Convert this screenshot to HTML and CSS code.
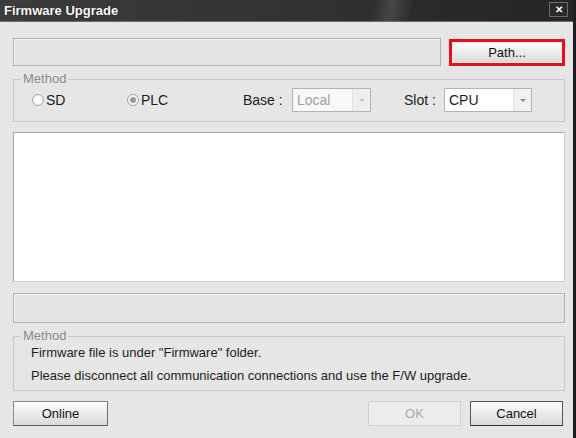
FILE: index.html
```html
<!DOCTYPE html>
<html>
<head>
    <title>Firmware Upgrade</title>
    <link rel="stylesheet" href="styles.css">
</head>
<body>
    <div class="dialog">
        <div class="titlebar">
            <span class="title">Firmware Upgrade</span>
            <span class="close">&#x2715;</span>
        </div>
        <div class="content">
            <div class="pathrow">
                <div class="field pathfield"></div>
                <div class="highlight"><button class="btn pathbtn">Path...</button></div>
            </div>

            <fieldset class="group">
                <legend>Method</legend>
                <div class="methodrow">
                    <label class="radio sd"><span class="circle"></span>SD</label>
                    <label class="radio plc"><span class="circle checked"></span>PLC</label>
                    <span class="lbl base">Base :</span>
                    <div class="combo disabled"><span class="val">Local</span><span class="arrow"></span></div>
                    <span class="lbl slot">Slot :</span>
                    <div class="combo cpu"><span class="val">CPU</span><span class="arrow"></span></div>
                </div>
            </fieldset>

            <div class="logbox"></div>
            <div class="field status"></div>

            <fieldset class="group info">
                <legend>Method</legend>
                <p>Firmware file is under "Firmware" folder.</p>
                <p class="second">Please disconnect all communication connections and use the F/W upgrade.</p>
            </fieldset>

            <div class="buttons">
                <button class="btn online">Online</button>
                <span class="spacer"></span>
                <button class="btn ok" disabled>OK</button>
                <button class="btn cancel">Cancel</button>
            </div>
        </div>
    </div>
</body>
</html>
```

FILE: styles.css
```css
body{
    margin: 0;
    font-family: "Liberation Sans", Arial, sans-serif;
    font-size: 13px;
    color: #1c1c1c;
    background: #e6e6e6;
}
.dialog{
    width: 573px;
    height: 438px;
    background: #e6e6e6;
    border-right: 3px solid #1e1e1e;
}
.titlebar{
    height: 22px;
    background: linear-gradient(100deg, #3c3c3c 0%, #2f2f2f 65%, #474747 68%, #2a2a2a 72%, #262626 100%);
    border-bottom: 1px solid #6a6a6a;
    box-sizing: border-box;
    display: flex;
    align-items: center;
    justify-content: space-between;
    padding: 0 5px 0 4px;
}
.title{
    color: #fff;
    font-weight: bold;
    font-size: 13px;
    text-shadow: 0 0 1px #000;
}
.close{
    width: 17px;
    height: 13px;
    border: 1px solid #6c6c6c;
    background: #2b2b2b;
    color: #fff;
    font-size: 10px;
    font-weight: bold;
    line-height: 13px;
    text-align: center;
    margin-top: -2px;
}
.content{
    padding: 16px 8px 0 13px;
}
.pathrow{
    display: flex;
    gap: 8px;
    height: 28px;
}
.field{
    background: #e4e4e4;
    border: 1px solid #b2b2b2;
    box-shadow: inset 1px 1px 0 #f2f2f2;
    box-sizing: border-box;
}
.pathfield{
    width: 428px;
    height: 28px;
}
.highlight{
    width: 116px;
    border: 3px solid #e0121c;
    box-sizing: border-box;
    padding: 1px;
    margin-top: 1px;
    height: 27px;
}
.btn{
    font-family: "Liberation Sans", Arial, sans-serif;
    font-size: 13px;
    color: #111;
    background: linear-gradient(#fdfdfd, #e9e9e9 55%, #dadada);
    border: 1px solid #8a8a8a;
    border-bottom-color: #5e5e5e;
    border-right-color: #6e6e6e;
    height: 25px;
    padding: 0;
    box-sizing: border-box;
}
.pathbtn{
    width: 100%;
    height: 100%;
    border: none;
}
.group{
    margin: 6px 0 0 0;
    padding: 2px 0 9px 0;
    border: 1px solid #c9c9c9;
    border-radius: 0;
    min-width: 0;
}
.group legend{
    color: #8c8c8c;
    padding: 0 2px;
    margin-left: 7px;
    line-height: 14px;
}
.methodrow{
    display: flex;
    align-items: center;
    height: 24px;
    padding-left: 18px;
}
.radio{
    display: flex;
    align-items: center;
    gap: 2px;
    font-size: 14px;
}
.radio.sd{
    width: 95px;
}
.radio.plc{
    width: 116px;
}
.circle{
    width: 10px;
    height: 10px;
    border: 1px solid #a8a8a8;
    border-radius: 50%;
    background: radial-gradient(#ffffff, #eeeeee);
    display: inline-flex;
    align-items: center;
    justify-content: center;
}
.circle.checked::after{
    content: "";
    width: 6px;
    height: 6px;
    border-radius: 50%;
    background: #9a9a9a;
}
.lbl{
    font-size: 14px;
    color: #222;
}
.lbl.base{
    width: 49px;
}
.lbl.slot{
    margin-left: 33px;
    width: 40px;
}
.combo{
    display: flex;
    height: 24px;
    border: 1px solid #b4b4b4;
    box-sizing: border-box;
    background: #fff;
}
.combo .val{
    flex: 1;
    line-height: 22px;
    padding-left: 4px;
    font-size: 14px;
}
.combo .arrow{
    width: 17px;
    background: #f1f1f1;
    border-left: 1px solid #e2e2e2;
    display: flex;
    align-items: center;
    justify-content: center;
}
.combo .arrow::after{
    content: "";
    border-left: 3px solid transparent;
    border-right: 3px solid transparent;
    border-top: 3px solid #888;
}
.combo.disabled{
    width: 79px;
    background: #f8f8f8;
}
.combo.disabled .val{
    color: #a0a0a0;
}
.combo.disabled .arrow{
    background: #efefef;
}
.combo.disabled .arrow::after{
    border-top-color: #c4c4c4;
}
.combo.cpu{
    width: 88px;
}
.logbox{
    margin-top: 10px;
    height: 150px;
    background: #fff;
    border: 1px solid #a9a9a9;
    border-right-color: #cfcfcf;
    border-bottom-color: #cfcfcf;
    box-sizing: border-box;
}
.status{
    margin-top: 11px;
    height: 30px;
}
.group.info{
    padding: 0 0 4px 0;
}
.info p{
    margin: 0;
    padding-left: 17px;
    line-height: 20px;
    font-size: 13px;
}
.info p.second{
    margin-top: 3px;
}
.buttons{
    display: flex;
    gap: 9px;
    margin-top: 10px;
    padding-right: 2px;
}
.spacer{
    flex: 1;
}
.online{
    width: 95px;
}
.ok{
    width: 93px;
    color: #a9a9a9;
    background: #ececec;
    border: 1px solid #d2d2d2;
}
.cancel{
    width: 93px;
    border-color: #555;
    border-bottom-color: #333;
}
```
